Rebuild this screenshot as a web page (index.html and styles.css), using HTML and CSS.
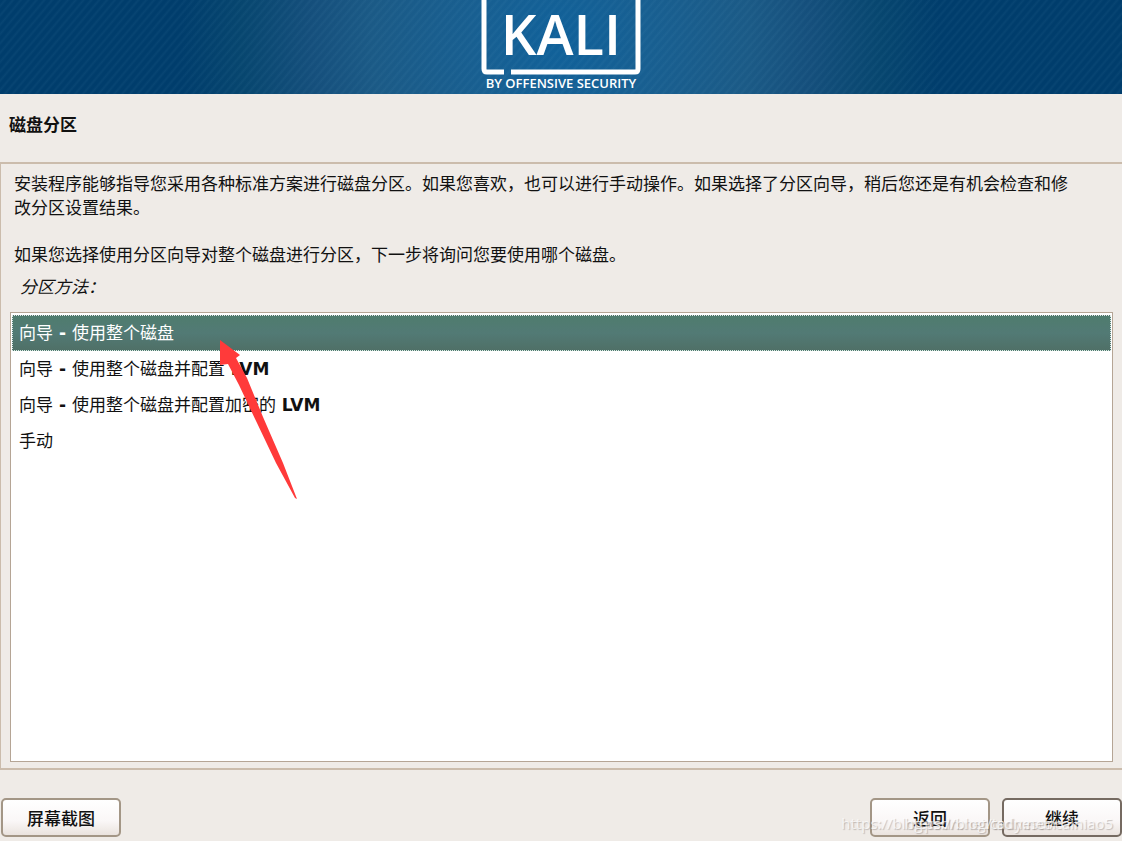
FILE: index.html
```html
<!DOCTYPE html>
<html lang="zh-CN">
<head>
<meta charset="utf-8">
<title>磁盘分区</title>
<link rel="stylesheet" href="styles.css">
</head>
<body>
<div class="installer">
  <header class="banner">
    <div class="logo">
      <svg class="logo-frame" viewBox="0 0 160 76" aria-hidden="true">
        <path d="M3 0V69Q3 72 6 72H23M30 72H154Q157 72 157 69V0" fill="none" stroke="#fff" stroke-width="5"/>
      </svg>
      <span class="logo-name">KALI</span>
      <span class="logo-tagline">BY OFFENSIVE SECURITY</span>
    </div>
  </header>
  <h1 class="title">磁盘分区</h1>
  <main class="panel">
    <p class="intro">安装程序能够指导您采用各种标准方案进行磁盘分区。如果您喜欢，也可以进行手动操作。如果选择了分区向导，稍后您还是有机会检查和修改分区设置结果。</p>
    <p class="intro">如果您选择使用分区向导对整个磁盘进行分区，下一步将询问您要使用哪个磁盘。</p>
    <p class="prompt" id="method">分区方法：</p>
    <div class="options" role="radiogroup" aria-labelledby="method">
      <label class="option"><input type="radio" name="method" checked><span>向导<b> - </b>使用整个磁盘</span></label>
      <label class="option"><input type="radio" name="method"><span>向导<b> - </b>使用整个磁盘并配置<b> LVM</b></span></label>
      <label class="option"><input type="radio" name="method"><span>向导<b> - </b>使用整个磁盘并配置加密的<b> LVM</b></span></label>
      <label class="option"><input type="radio" name="method"><span>手动</span></label>
      <svg class="pointer" viewBox="0 0 78 160" aria-hidden="true">
        <path d="M0 0L20 15L16 18L27 38L43 77L63 123L77 159L75 158L56 123L37 83L19 45L8 24L0 25Z" fill="#ff3a3a"/>
      </svg>
    </div>
  </main>
  <footer class="actions">
    <button class="button" type="button">屏幕截图</button>
    <button class="button back" type="button">返回</button>
    <button class="button default" type="button">继续</button>
    <span class="watermark first">https://blog.csdn.net/tadyesdn</span>
    <span class="watermark second">https://blog.csdn.net/cainiao5</span>
  </footer>
</div>
</body>
</html>
```
FILE: styles.css
```css
* { box-sizing: border-box; }

body {
  margin: 0;
  background: #efebe7;
  color: #111;
  font: 17px/24px "DejaVu Sans", "Noto Sans CJK SC", sans-serif;
}

.installer {
  display: flex;
  flex-direction: column;
  min-height: 100vh;
}

.banner {
  display: flex;
  justify-content: center;
  height: 94px;
  background:
    repeating-linear-gradient(130deg, rgba(255, 255, 255, 0) 0 2px, rgba(130, 190, 220, 0.06) 4px, rgba(255, 255, 255, 0) 6px),
    radial-gradient(circle at 50% 40px, #10619a 0, #185f91 90px, #1b5a86 190px, #154f7c 250px, #07466f 320px, #003d6c 380px);
}

.logo {
  position: relative;
  width: 160px;
  color: #fff;
  text-align: center;
}

.logo-frame {
  display: block;
  width: 100%;
  height: 76px;
}

.logo-name {
  position: absolute;
  inset: 0 0 auto;
  font: 600 56px/66px "Open Sans", sans-serif;
}

.logo-tagline {
  display: flex;
  justify-content: center;
  font: 600 13px/15px "Open Sans", sans-serif;
  white-space: nowrap;
}

.title {
  margin: 0;
  padding: 18px 9px 26px;
  font: bold 17px/24px "Noto Sans CJK SC", sans-serif;
}

.panel {
  display: flex;
  flex: 1;
  flex-direction: column;
  padding: 8px 9px 6px;
  border: 1px solid #cbbcac;
  border-width: 2px 0 2px 1px;
}

.intro {
  margin: 0 36px 23px 4px;
}

.prompt {
  margin: -15px 0 13px 10px;
  font-style: italic;
}

.options {
  position: relative;
  flex: 1;
  padding: 2px 1px;
  border: 1px solid #b5a595;
  background: #fff;
}

.option {
  display: flex;
  align-items: center;
  height: 36px;
  padding: 0 7px;
  white-space: pre;
}

.option input {
  width: 0;
  height: 0;
  margin: 0;
  appearance: none;
  outline: none;
}

.option:has(input:checked) {
  border: 1px dotted #dbe8e4;
  padding: 0 6px;
  background: linear-gradient(#4f7c6e, #527a75 50%, #4f7067);
  color: #fff;
}

.pointer {
  position: absolute;
  top: 27px;
  left: 209px;
  width: 78px;
  height: 160px;
}

.actions {
  position: relative;
  display: flex;
  gap: 12px;
  padding: 28px 0 4px 1px;
}

.button {
  width: 120px;
  height: 39px;
  border: 2px solid #a39686;
  border-radius: 5px;
  background: linear-gradient(#fff, #faf7f7 60%, #eae3de);
  color: #111;
  font: 500 17px/24px "Noto Sans CJK SC", sans-serif;
}

.back { margin-left: auto; }

.default { border-color: #756a61; }

.watermark {
  position: absolute;
  right: 9px;
  bottom: 8px;
  color: rgba(255, 255, 255, 0.7);
  font: 15px/20px "Open Sans", sans-serif;
  text-shadow: 1px 1px 1px rgba(120, 110, 105, 0.4);
  pointer-events: none;
}

.first { right: 66px; }
```
